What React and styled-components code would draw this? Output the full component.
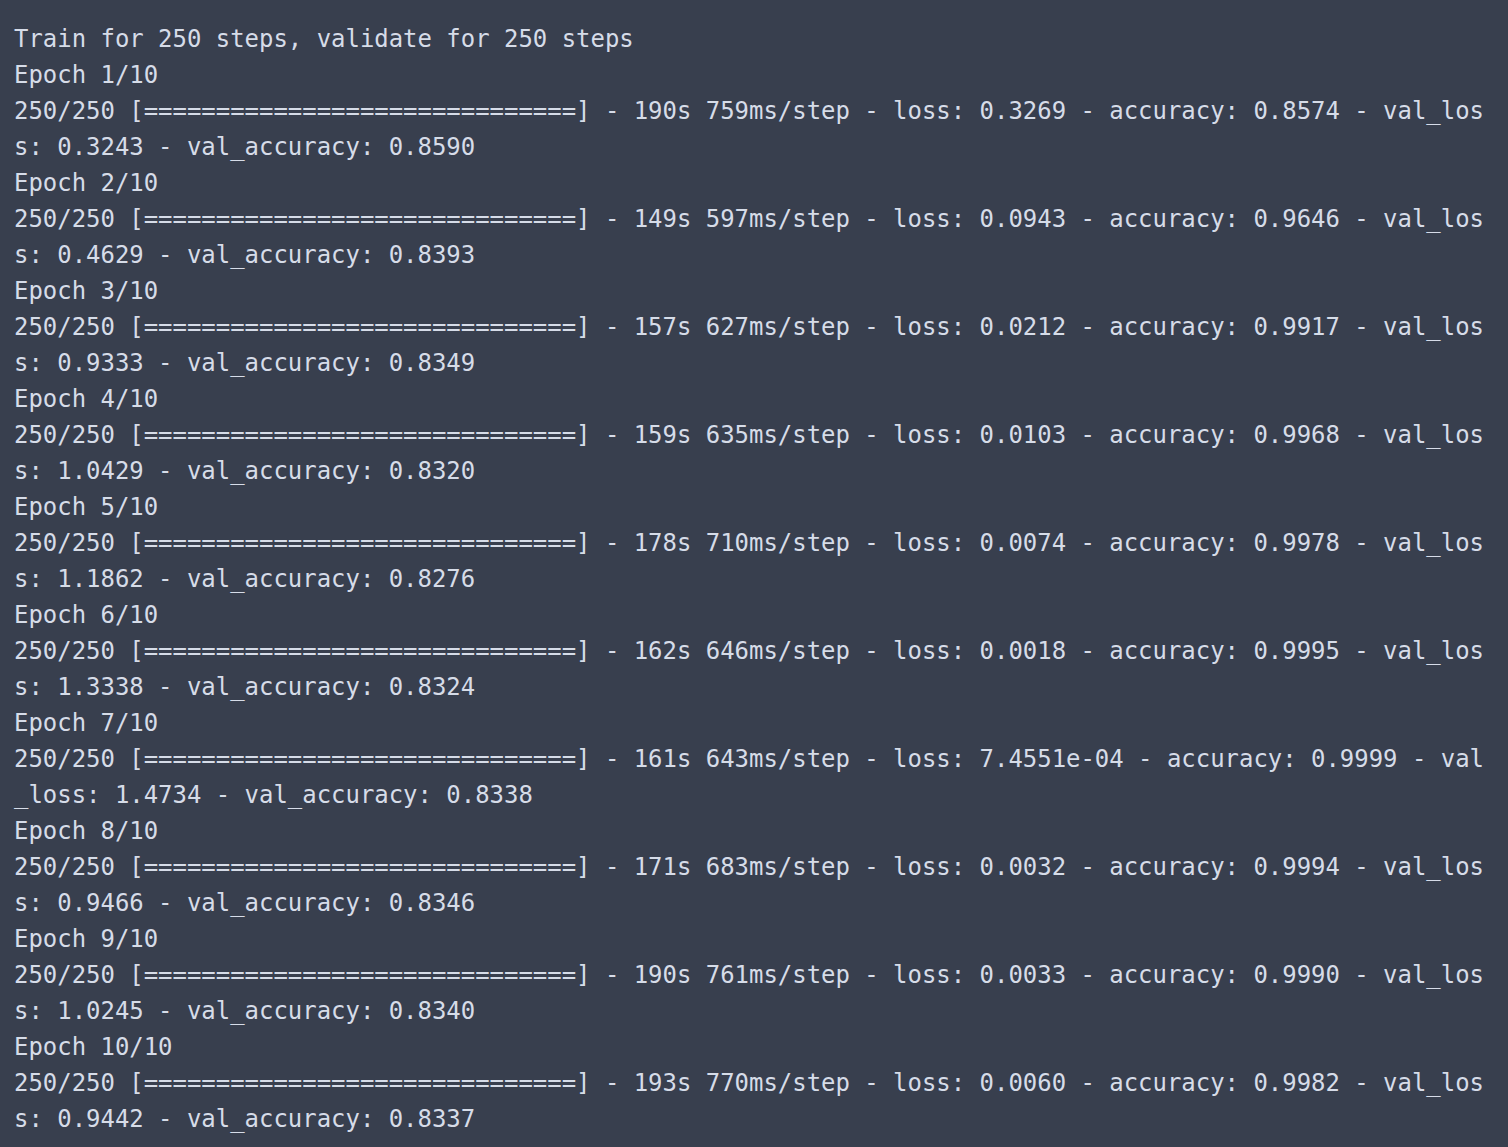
import React from "react";
import styled, { createGlobalStyle } from "styled-components";

const Global = createGlobalStyle`
  html, body { margin: 0; padding: 0; background: #383f4e; }
`;

const Console = styled.div`
  min-height: 1147px;
  box-sizing: border-box;
  background: #383f4e;
  padding: 21px 0 0 14px;
  font-family: "DejaVu Sans Mono", "Liberation Mono", monospace;
  font-size: 23.95px;
  line-height: 36px;
  color: #d6dce8;
`;

const Line = styled.div`
  white-space: pre;
`;

const bar = "=".repeat(30);
const epochs = [
  ["190s 759ms/step", "0.3269", "0.8574", "0.3243", "0.8590"],
  ["149s 597ms/step", "0.0943", "0.9646", "0.4629", "0.8393"],
  ["157s 627ms/step", "0.0212", "0.9917", "0.9333", "0.8349"],
  ["159s 635ms/step", "0.0103", "0.9968", "1.0429", "0.8320"],
  ["178s 710ms/step", "0.0074", "0.9978", "1.1862", "0.8276"],
  ["162s 646ms/step", "0.0018", "0.9995", "1.3338", "0.8324"],
  ["161s 643ms/step", "7.4551e-04", "0.9999", "1.4734", "0.8338"],
  ["171s 683ms/step", "0.0032", "0.9994", "0.9466", "0.8346"],
  ["190s 761ms/step", "0.0033", "0.9990", "1.0245", "0.8340"],
  ["193s 770ms/step", "0.0060", "0.9982", "0.9442", "0.8337"],
];

const WIDTH = 102;

function buildLines() {
  const lines = ["Train for 250 steps, validate for 250 steps"];
  epochs.forEach((e, i) => {
    lines.push(`Epoch ${i + 1}/10`);
    const full = `250/250 [${bar}] - ${e[0]} - loss: ${e[1]} - accuracy: ${e[2]} - val_loss: ${e[3]} - val_accuracy: ${e[4]}`;
    for (let p = 0; p < full.length; p += WIDTH) lines.push(full.slice(p, p + WIDTH));
  });
  return lines;
}

export default function App() {
  return (
    <>
      <Global />
      <Console>
        {buildLines().map((l, i) => (
          <Line key={i}>{l}</Line>
        ))}
      </Console>
    </>
  );
}
